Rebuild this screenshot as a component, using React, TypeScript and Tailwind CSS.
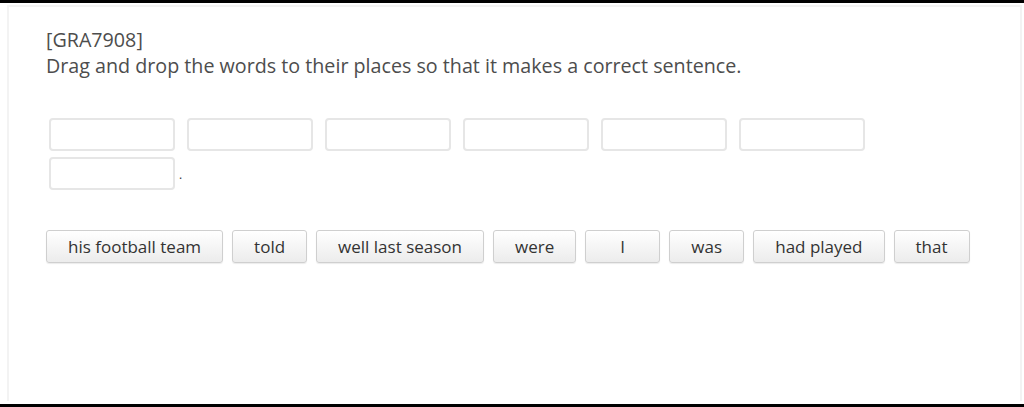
const words = [
  'his football team',
  'told',
  'well last season',
  'were',
  'I',
  'was',
  'had played',
  'that',
];

const SLOTS = 7;

export default function App() {
  return (
    <div
      className="h-[407px] w-[1024px] overflow-hidden bg-white border-t-[3px] border-b-[3px] border-black"
      style={{ fontFamily: '"Open Sans", "Liberation Sans", sans-serif' }}
    >
      <div className="ml-[7px] mr-[2px] mt-[2px] h-[396px] border-l-2 border-r-2 border-t-2 border-[#f3f3f3] pl-[37px] pr-[38px] pt-[20px]">
        {/* Consigne */}
        <div className="text-[19.7px] leading-[26px] text-[#4d4d4d]">
          <p>[GRA7908]</p>
          <p>Drag and drop the words to their places so that it makes a correct sentence.</p>
        </div>

        {/* Zones de dépôt */}
        <div className="mt-[39px] ml-[3px] flex flex-wrap gap-x-[12px] gap-y-[6px]">
          {Array.from({ length: SLOTS }).map((_, i) =>
            i === SLOTS - 1 ? (
              <div key={i} className="flex items-end">
                <div className="h-[33px] w-[126px] rounded-[4px] border-2 border-[#e6e6e6]" />
                <span className="ml-[4px] mb-[9px] text-[12px] leading-none text-[#333]">.</span>
              </div>
            ) : (
              <div key={i} className="h-[33px] w-[126px] rounded-[4px] border-2 border-[#e6e6e6]" />
            )
          )}
        </div>

        {/* Étiquettes */}
        <div className="mt-[40px] flex gap-[9px]">
          {words.map((w) => (
            <button
              key={w}
              className="h-[33px] min-w-[75px] shrink-0 whitespace-nowrap px-[21px] rounded-[3px] border border-[#cfcfcf] bg-gradient-to-b from-white to-[#ececec] text-[17px] text-[#333] shadow-[0_1px_1px_rgba(0,0,0,0.08)]"
            >
              {w}
            </button>
          ))}
        </div>
      </div>
    </div>
  );
}
